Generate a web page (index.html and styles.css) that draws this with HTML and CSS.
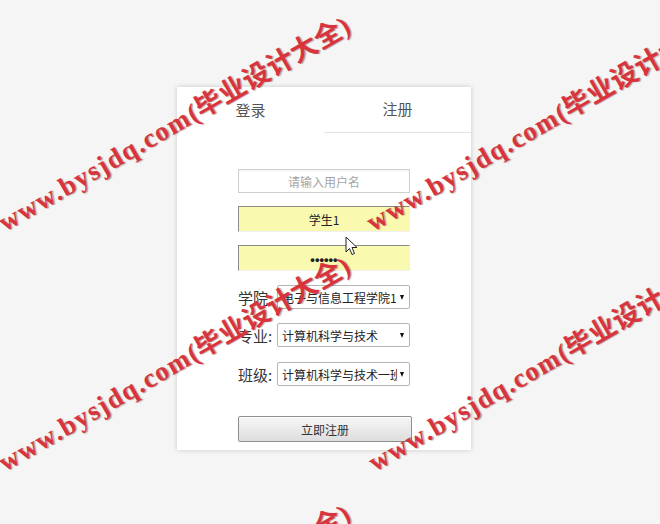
FILE: index.html
```html
<!DOCTYPE html>
<html lang="zh-CN">
<head>
<meta charset="utf-8">
<title>注册</title>
<link rel="stylesheet" href="styles.css">
</head>
<body>
<div class="page">
  <div class="card">
    <div class="tabs">
      <div class="tab">登录</div>
      <div class="tab tab-line">注册</div>
    </div>
    <div class="form">
      <div class="field placeholder">请输入用户名</div>
      <div class="field filled gap13">学生1</div>
      <div class="field filled pwd gap13">••••••</div>
      <div class="row gap14">
        <span class="label">学院:</span>
        <div class="select"><span class="sel-text">电子与信息工程学院1</span><span class="arrow"></span></div>
      </div>
      <div class="row gap14">
        <span class="label">专业:</span>
        <div class="select"><span class="sel-text">计算机科学与技术</span><span class="arrow"></span></div>
      </div>
      <div class="row gap15">
        <span class="label">班级:</span>
        <div class="select"><span class="sel-text">计算机科学与技术一班</span><span class="arrow"></span></div>
      </div>
      <div class="button">立即注册</div>
    </div>
  </div>

  <svg class="cursor" width="13" height="20" viewBox="0 0 13 20">
    <path d="M1 1 L1 16 L4.5 12.5 L7 18.5 L9.5 17.5 L7 11.5 L12 11.5 Z" fill="#fff" stroke="#222" stroke-width="1" stroke-linejoin="round"/>
  </svg>

  <div class="wm wm1"><span class="wm-latin">www.bysjdq.com</span>(毕业设计大全)</div>
  <div class="wm wm2"><span class="wm-latin">www.bysjdq.com</span>(毕业设计大全)</div>
  <div class="wm wm3"><span class="wm-latin">www.bysjdq.com</span>(毕业设计大全)</div>
  <div class="wm wm4"><span class="wm-latin">www.bysjdq.com</span>(毕业设计大全)</div>
  <div class="wm wm5"><span class="wm-latin">www.bysjdq.com</span>(毕业设计大全)</div>
</div>
</body>
</html>
```

FILE: styles.css
```css
html, body {
  margin: 0;
  padding: 0;
  background: #f5f5f5;
  overflow: hidden;
}

.page {
  position: relative;
  width: 660px;
  height: 524px;
  overflow: hidden;
  padding: 87px 0 0 177px;
  box-sizing: border-box;
  font-family: "Noto Sans CJK SC", "Noto Sans", sans-serif;
  color: #333;
}

.card {
  width: 294px;
  background: #fff;
  box-shadow: 0 0 5px rgba(0, 0, 0, 0.18);
  padding-bottom: 8px;
}

.tabs {
  display: flex;
  height: 46px;
}

.tab {
  flex: 1;
  display: flex;
  align-items: center;
  justify-content: center;
  font-size: 15px;
  color: #555;
  box-sizing: border-box;
  padding-bottom: 2px;
}

.tab-line {
  border-bottom: 1px solid #e2e2e2;
}

.form {
  display: flex;
  flex-direction: column;
  padding: 36px 0 0 61px;
}

.field {
  width: 172px;
  height: 24px;
  box-sizing: border-box;
  border: 1px solid #cfcfcf;
  box-shadow: inset 0 1px 1px rgba(0, 0, 0, 0.05);
  display: flex;
  align-items: center;
  justify-content: center;
  font-size: 12px;
  color: #222;
}

.placeholder {
  color: #a5a5a5;
}

.filled {
  height: 26px;
  background: #f9f9b0;
  border-color: #8a8a8a #f0f0f0 #f0f0f0 #8a8a8a;
  box-shadow: none;
}

.pwd {
  font-family: "Liberation Sans", sans-serif;
  font-size: 13px;
  font-weight: bold;
  padding-top: 2px;
}

.gap13 { margin-top: 13px; }
.gap14 { margin-top: 14px; }
.gap15 { margin-top: 15px; }

.row {
  display: flex;
  align-items: center;
  height: 24px;
}

.label {
  width: 39px;
  font-size: 15px;
  color: #333;
  white-space: nowrap;
}

.select {
  width: 133px;
  height: 24px;
  box-sizing: border-box;
  border: 1px solid #b4b4b4;
  border-radius: 2px;
  background: #fff;
  display: flex;
  align-items: center;
  padding: 0 5px 0 4px;
  font-size: 12px;
  color: #222;
}

.sel-text {
  flex: 1;
  overflow: hidden;
  white-space: nowrap;
}

.arrow {
  width: 0;
  height: 0;
  margin-left: 3px;
  border-left: 2.5px solid transparent;
  border-right: 2.5px solid transparent;
  border-top: 5px solid #111;
}

.button {
  margin-top: 30px;
  width: 174px;
  height: 26px;
  box-sizing: border-box;
  border: 1px solid #8e8e8e;
  border-radius: 2px;
  background: linear-gradient(#f6f6f6, #dedede);
  box-shadow: inset 0 1px 0 #fff;
  display: flex;
  align-items: center;
  justify-content: center;
  font-size: 12px;
  color: #333;
}

.cursor {
  position: absolute;
  left: 345px;
  top: 236px;
}

.wm {
  position: absolute;
  font-family: "Liberation Serif", "Noto Sans CJK SC", serif;
  font-weight: bold;
  font-size: 27px;
  line-height: 1;
  letter-spacing: 0.5px;
  color: #d9343d;
  text-shadow: 1px 1px 1px rgba(70, 50, 50, 0.45);
  white-space: nowrap;
  transform-origin: 0 22px;
  transform: rotate(-30deg);
}

.wm-latin {
  letter-spacing: 1.5px;
}

.wm1 { left: 5px; top: 210px; }
.wm2 { left: 373px; top: 210px; }
.wm3 { left: 5px; top: 450px; }
.wm4 { left: 375px; top: 450px; }
.wm5 { left: 5px; top: 698px; }
```
